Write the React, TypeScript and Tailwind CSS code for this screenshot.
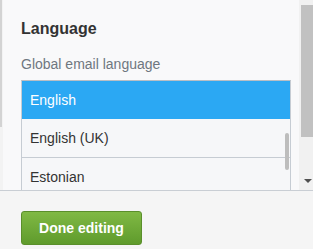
const options = ['English', 'English (UK)', 'Estonian'];

export default function App() {
  return (
    <div className="w-[313px] h-[249px] overflow-hidden bg-[#f5f5f5] font-['Liberation_Sans',Arial,sans-serif]">
      {/* Scrolling area */}
      <div className="flex h-[190px] overflow-hidden border-b border-[#c9ced4] box-content">
        <div className="w-[3px] shrink-0 bg-[#f3f3f3]">
          <div className="w-[2px] h-[127px] bg-[#d3d3d3]" />
        </div>

        <div className="w-[296px] shrink-0 bg-[#f9f9fa] pl-[18px] pr-[8px] pt-[19px]">
          <h3 className="text-[16px] leading-[19px] font-bold text-[#333]">Language</h3>
          <p className="mt-[18px] text-[14px] leading-[17px] text-[#6f7780]">Global email language</p>

          <div className="relative mt-[7px] border border-[#c6ccd3] border-t-[#b9bec4]">
            {options.map((o, i) => (
              <div
                key={o}
                className={
                  i === 0
                    ? 'h-[38px] flex items-center px-[8px] text-[14px] bg-[#2ba8f3] text-white'
                    : 'h-[39px] flex items-center px-[8px] text-[14px] bg-[#f6f7f9] text-[#333] border-b border-[#c6ccd3]'
                }
              >
                {o}
              </div>
            ))}
            {/* list scrollbar */}
            <div className="absolute right-[1px] top-[52px] w-[4px] h-[37px] rounded-full bg-[#bdbdbd]" />
          </div>
        </div>

        {/* outer scrollbar */}
        <div className="relative w-[14px] shrink-0 bg-[#f1f1f1]">
          <div className="ml-[2px] mt-[5px] w-[12px] h-[132px] bg-[#c1c1c1]" />
          <div className="absolute left-[5px] top-[179px] w-0 h-0 border-l-[4px] border-r-[4px] border-t-[4px] border-l-transparent border-r-transparent border-t-[#505050]" />
        </div>
      </div>

      {/* Footer */}
      <div className="pl-[21px] pt-[20px]">
        <div className="w-[121px] h-[34px] flex items-center justify-center rounded-[3px] border border-[#5a8f2b] bg-gradient-to-b from-[#80b944] to-[#5f9b2c] cursor-pointer">
          <span className="text-white text-[14px] leading-[17px] font-bold whitespace-nowrap">Done editing</span>
        </div>
      </div>
    </div>
  );
}
